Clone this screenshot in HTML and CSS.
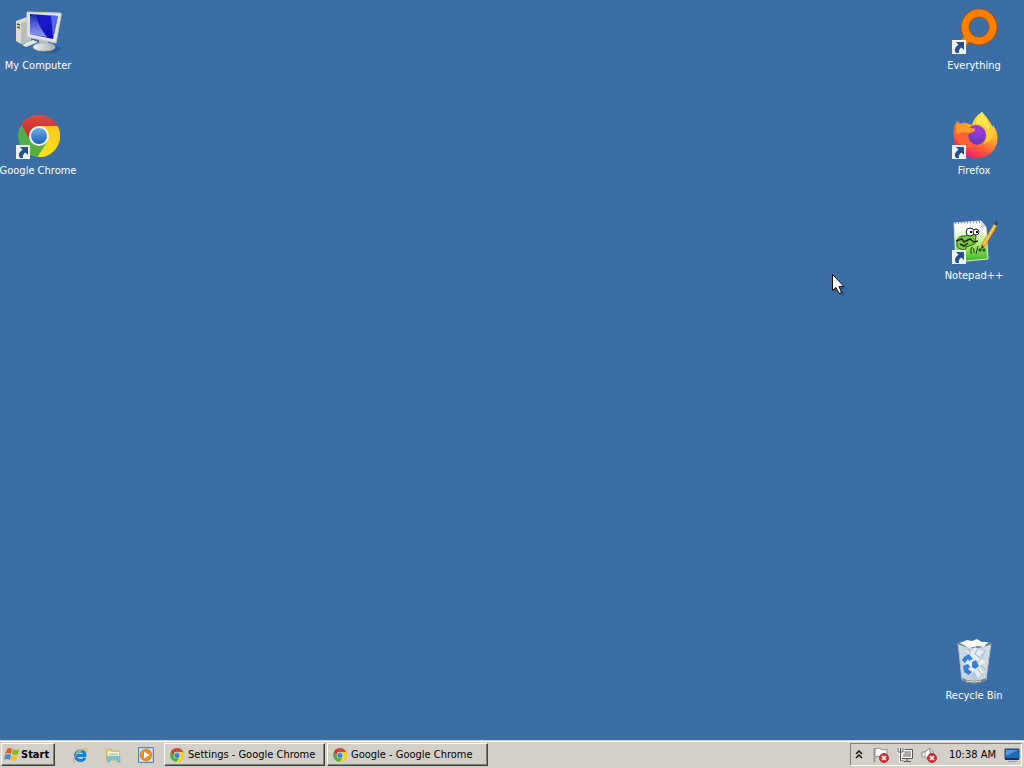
FILE: index.html
```html
<!DOCTYPE html>
<html lang="en">
<head>
<meta charset="utf-8">
<meta name="viewport" content="width=device-width, initial-scale=1">
<title>Desktop</title>
<link rel="stylesheet" href="styles.css">
</head>
<body>
<svg class="defs" aria-hidden="true">
  <defs>
    <linearGradient id="screen" x1="0" y1="0" x2="1" y2="1"><stop offset="0" stop-color="#1717a4"/><stop offset=".45" stop-color="#1a1bd0"/><stop offset="1" stop-color="#0505a0"/></linearGradient>
    <linearGradient id="gloss" x1="0" y1="0" x2="0" y2="1"><stop offset="0" stop-color="#2a38c0"/><stop offset="1" stop-color="#c4d8ff"/></linearGradient>
    <linearGradient id="metal" x1="0" y1="0" x2="1" y2="0"><stop offset="0" stop-color="#f4f4ee"/><stop offset="1" stop-color="#a9aeb4"/></linearGradient>
    <linearGradient id="red" x1="0" y1="0" x2="0" y2="1"><stop offset="0" stop-color="#e04a42"/><stop offset="1" stop-color="#c02723"/></linearGradient>
    <linearGradient id="yellow" x1="0" y1="0" x2="0" y2="1"><stop offset="0" stop-color="#fbc91c"/><stop offset="1" stop-color="#fddf1d"/></linearGradient>
    <linearGradient id="green" x1="0" y1="0" x2="1" y2="1"><stop offset="0" stop-color="#4caf50"/><stop offset="1" stop-color="#5aae3c"/></linearGradient>
    <linearGradient id="blue" x1="0" y1="0" x2="0" y2="1"><stop offset="0" stop-color="#69aee4"/><stop offset="1" stop-color="#1b62b5"/></linearGradient>
    <linearGradient id="fire" x1=".85" y1="0" x2=".3" y2="1"><stop offset="0" stop-color="#fff052"/><stop offset=".4" stop-color="#ffb52c"/><stop offset=".7" stop-color="#ff5a37"/><stop offset="1" stop-color="#e8187a"/></linearGradient>
    <radialGradient id="globe" cx=".6" cy=".2" r=".9"><stop offset="0" stop-color="#a63ce0"/><stop offset="1" stop-color="#553ab8"/></radialGradient>
    <linearGradient id="page" x1="0" y1="0" x2="0" y2="1"><stop offset=".2" stop-color="#ffffff"/><stop offset=".55" stop-color="#b6ef73"/><stop offset="1" stop-color="#35b31c"/></linearGradient>
    <linearGradient id="bin" x1="0" y1="0" x2="1" y2="0"><stop offset="0" stop-color="#d4e0ea"/><stop offset=".5" stop-color="#b3c5d4"/><stop offset="1" stop-color="#dbe5ec"/></linearGradient>
    <symbol id="chrome" viewBox="0 0 42 42">
      <circle cx="21" cy="21" r="21" fill="url(#green)"/>
      <path d="M21 11H39.5A21 21 0 0 1 19.5 42L29.7 26Z" fill="url(#yellow)"/>
      <path d="M3.4 9.5A21 21 0 0 1 39.5 11H21A10 10 0 0 0 12 25Z" fill="url(#red)"/>
      <circle cx="21" cy="21" r="10" fill="#f4f6f4"/>
      <circle cx="21" cy="21" r="8" fill="url(#blue)"/>
    </symbol>
    <symbol id="shortcut" viewBox="0 0 14 14">
      <path d="M0 0H14V14H0Z" fill="#eef2f6"/>
      <path d="M4 2H12V10L9.500 7.500C7 9 6.500 10.500 7 13H4C2 10 3 7 6.500 4.700Z" fill="#24508c"/>
    </symbol>
    <symbol id="denied" viewBox="0 0 10 10">
      <circle cx="5" cy="5" r="4.500" fill="#d9363b" stroke="#b9282c"/>
      <path d="M3 3L7 7M7 3L3 7" stroke="#fff" stroke-width="1.500"/>
    </symbol>
  </defs>
</svg>

<main class="desktop">
  <div class="column">
    <button class="shortcut" type="button">
      <svg class="picture" viewBox="0 0 48 48" aria-hidden="true">
        <ellipse cx="35" cy="41" rx="12" ry="4" fill="#234d7c" opacity=".5"/>
        <path d="M2 13L13 9L17 12V34L7 36L2 33Z" fill="#dcdcd4"/>
        <path d="M7 15L17 12V34L7 36Z" fill="#babdbd"/>
        <path d="M3 16L6 17M3 19L6 20" stroke="#4b5a4e" stroke-width="1.500"/>
        <path d="M8 37L19 32L24 34L12 39Z" fill="#e9e9e4"/>
        <path d="M25 31H34V38H25Z" fill="#b8bcc2"/>
        <ellipse cx="30" cy="39" rx="11" ry="4" fill="url(#metal)" stroke="#b7babd"/>
        <path d="M13 4L46 5Q48 5 47 8L42 35L13 29Z" fill="#dfe3e6" stroke="#c4c9ce"/>
        <path d="M16 6L44 8L39 31L16 26Z" fill="url(#screen)"/>
        <path d="M16 8L22 7Q24 18 33 29L16 26Z" fill="url(#gloss)" opacity=".7"/>
        <path d="M37 7L44 8L39 31Z" fill="#6b8af0" opacity=".7"/>
      </svg>
      <span class="label">My Computer</span>
    </button>
    <button class="shortcut" type="button">
      <svg class="picture" viewBox="0 0 48 48" aria-hidden="true">
        <use href="#chrome" x="4" y="2" width="42" height="42"/>
        <use href="#shortcut" x="2" y="32" width="14" height="14"/>
      </svg>
      <span class="label">Google Chrome</span>
    </button>
  </div>

  <div class="column">
    <button class="shortcut" type="button">
      <svg class="picture" viewBox="0 0 48 48" aria-hidden="true">
        <path d="M21 27L13 35" stroke="#a2541c" stroke-width="9"/>
        <circle cx="29" cy="19" r="14" fill="none" stroke="#a2541c" stroke-width="9"/>
        <path d="M21 27L13 35" stroke="#ff8000" stroke-width="7"/>
        <circle cx="29" cy="19" r="14" fill="none" stroke="#ff8000" stroke-width="7"/>
        <use href="#shortcut" x="2" y="32" width="14" height="14"/>
      </svg>
      <span class="label">Everything</span>
    </button>
    <button class="shortcut" type="button">
      <svg class="picture" viewBox="0 0 48 48" aria-hidden="true">
        <path d="M4 15Q5 10 8 8L10 11Q13 9 16 10L22 12Q24 4 32 -1Q33 5 38 9Q41 12 42 15L43 12Q49 20 47 30Q44 42 31 45Q16 47 8 36Q1 26 4 15Z" fill="url(#fire)"/>
        <circle cx="26" cy="22" r="10" fill="url(#globe)"/>
        <path d="M4 15Q5 10 8 8L10 11Q15 9 18 14L25 16Q25 19 20 20Q17 22 19 26Q21 31 27 32Q19 38 11 33Q4 27 4 15Z" fill="#ff6334"/>
        <path d="M7 9L10 11Q15 9 18 14L25 16Q25 19 19 20Q13 18 7 21Q5 14 7 9Z" fill="#ff9a32"/>
        <path d="M22 12Q27 10 31 13Q35 16 38 17L36 19Q38 26 33 31Q42 29 44 20Q43 10 32 -1Q24 4 22 12Z" fill="#ffcd3c"/>
        <path d="M32 -1Q26 4 26 11Q34 10 38 17Q42 13 32 -1Z" fill="#ffe84c"/>
        <use href="#shortcut" x="2" y="32" width="14" height="14"/>
      </svg>
      <span class="label">Firefox</span>
    </button>
    <button class="shortcut" type="button">
      <svg class="picture" viewBox="0 0 48 48" aria-hidden="true">
        <path d="M4 5L31 3L36 9L38 41L6 44Z" fill="url(#page)" stroke="#dfe8e0"/>
        <path d="M31 3L36 9L31 10Z" fill="#d2d8d6"/>
        <path d="M5 5L31 4" stroke="#8a9298" stroke-width="2" stroke-dasharray="1 2"/>
        <path d="M7 25Q7 17 16 18L19 16Q29 15 25 22Q28 25 22 27L16 29Q16 34 11 31Q6 30 7 25Z" fill="#7acb35" stroke="#2a5620"/>
        <path d="M6 23L12 21L14 24L20 21L24 24L28 23M10 26L14 28L18 25" fill="none" stroke="#1b281b" stroke-width="1.500"/>
        <circle cx="20" cy="14" r="4" fill="#fff" stroke="#222"/>
        <circle cx="26" cy="14" r="3" fill="#fff" stroke="#222"/>
        <path d="M20 14h2M26 14h2" stroke="#111" stroke-width="2"/>
        <path d="M21 36V30Q24 28 24 35M26 36L28 28M28 32h4M30 30v4M32 32h4M34 30v4" fill="none" stroke="#143d12"/>
        <path d="M31 31L32 26L44 6L47 8L35 28Z" fill="#f8b32b" stroke="#b76c18" stroke-width=".5"/>
        <path d="M34 26L45 7" stroke="#ffe07b"/>
        <path d="M44 6L46 2L48 3L47 8Z" fill="#3f4c66"/>
        <path d="M31 31L32 27L34 29Z" fill="#332b20"/>
        <use href="#shortcut" x="2" y="32" width="14" height="14"/>
      </svg>
      <span class="label">Notepad++</span>
    </button>
    <button class="shortcut bottom" type="button">
      <svg class="picture" viewBox="0 0 48 48" aria-hidden="true">
        <path d="M8 5L41 5L36 42Q24 48 12 42Z" fill="url(#bin)" stroke="#aebdca"/>
        <path d="M8 5Q15 9 24 9T41 5" fill="none" stroke="#637a8c" stroke-width="2"/>
        <path d="M10 5L17 2L22 3L27 1L32 4L38 4L34 9L28 8L19 10Z" fill="#f8fafa"/>
        <path d="M25 9L34 14L28 19L36 24L29 28L34 34L28 40L24 33L20 38L14 32L17 26L12 20L19 16L14 12L21 13Z" fill="#f0f5f9" opacity=".8"/>
        <path d="M28 10L25 16L31 21L27 25M18 11L21 16M31 27L36 32M36 12L32 18M27 30L32 37" fill="none" stroke="#a1b4c3"/>
        <path d="M14 19L19 16L23 21L19 23L18 21L15 25L12 22ZM22 24L26 22L29 28L25 31L22 29ZM13 28L18 26L20 29L18 31L22 34L19 37L14 34Z" fill="#397dd8"/>
        <path d="M12 40Q24 46 36 40L36 43Q24 49 13 43Z" fill="#718085"/>
        <path d="M16 43Q24 45 31 43" stroke="#dce2df" fill="none"/>
      </svg>
      <span class="label">Recycle Bin</span>
    </button>
  </div>

  <svg class="pointer" viewBox="0 0 16 23" aria-hidden="true">
    <path d="M2 3V19L6 16L10 22L13 20L10 15H15Z" fill="#18385c" opacity=".4"/>
    <path d="M.5 .5V16.500L4 13.500L7 19.500L9.500 18.500L7 12.500H12Z" fill="#fff" stroke="#111"/>
  </svg>
</main>

<footer class="taskbar">
  <button class="raised start" type="button">
    <svg class="small" viewBox="0 0 16 16" aria-hidden="true">
      <path d="M3 2Q6 0 8 2L7 7Q4 5 1 7Z" fill="#e75a25"/>
      <path d="M9 2Q12 4 15 2L14 7Q11 9 8 7Z" fill="#80b92c"/>
      <path d="M1 8Q4 6 7 8L6 13Q3 11 0 13Z" fill="#3f8fd2"/>
      <path d="M8 8Q11 10 14 8L12 13Q10 15 6 13Z" fill="#f7bd24"/>
    </svg>
    <span>Start</span>
  </button>
  <nav class="quick" aria-label="Quick launch">
    <button class="plain" type="button" aria-label="Internet Explorer">
      <svg class="small" viewBox="0 0 16 16" aria-hidden="true">
        <path d="M13 11Q11 14 7.500 13.500Q3.500 12.500 3.500 8.500Q4 4 8.500 4Q13 4 13 8.500H5" fill="none" stroke="#1b80c8" stroke-width="3"/>
        <path d="M4 7Q5.500 3.500 9 3.500" fill="none" stroke="#65c5f2" stroke-width="1.500"/>
        <path d="M3 15Q0 15 2 11Q6 5 11 2Q15 0 15 2Q15.500 3 14.500 5" fill="none" stroke="#e6b729"/>
      </svg>
    </button>
    <button class="plain" type="button" aria-label="Windows Explorer">
      <svg class="small" viewBox="0 0 16 16" aria-hidden="true">
        <path d="M1 3L6 2L7 4L14 4V13H2Z" fill="#eadb86" stroke="#c7af55"/>
        <path d="M3 5H14V9H3Z" fill="#fff7cd"/>
        <path d="M4 7H13" stroke="#90bb72"/>
        <path d="M2 15V11Q2 9 4 9H12Q15 9 15 11V15H12V12H5V15Z" fill="#75c5e4" stroke="#5aa3c9" stroke-width=".5"/>
      </svg>
    </button>
    <button class="plain" type="button" aria-label="Windows Media Player">
      <svg class="small" viewBox="0 0 16 16" aria-hidden="true">
        <path d="M.5 .5H15.500V15.500H.5Z" fill="#b7d2f0" stroke="#5582bc"/>
        <path d="M2 2H14V14H2Z" fill="#dce9f6"/>
        <circle cx="8" cy="8" r="6" fill="#f28b17" stroke="#d66f12" stroke-width=".5"/>
        <path d="M6 4.500L11.500 8L6 11.500Z" fill="#fff"/>
      </svg>
    </button>
  </nav>
  <nav class="windows" aria-label="Open windows">
    <button class="raised task" type="button"><svg class="small" aria-hidden="true"><use href="#chrome" x="1" y="1" width="14" height="14"/></svg><span>Settings - Google Chrome</span></button>
    <button class="raised task" type="button"><svg class="small" aria-hidden="true"><use href="#chrome" x="1" y="1" width="14" height="14"/></svg><span>Google - Google Chrome</span></button>
  </nav>
  <div class="tray">
    <button class="plain expand" type="button" aria-label="Show hidden icons">
      <svg class="chevrons" viewBox="0 0 8 10" aria-hidden="true"><path d="M1 4L4 1L7 4M1 8L4 5L7 8" fill="none" stroke="#111" stroke-width="1.500"/></svg>
    </button>
    <button class="plain" type="button" aria-label="Action Center">
      <svg class="small" viewBox="0 0 16 16" aria-hidden="true">
        <path d="M1.500 1V15" stroke="#999" stroke-width="2"/>
        <path d="M2 2Q6 0 8 2T14 2V10Q10 12 8 10T2 10Z" fill="#fafafa" stroke="#8a8a88"/>
        <use href="#denied" x="6" y="6" width="10" height="10"/>
      </svg>
    </button>
    <button class="plain" type="button" aria-label="Network">
      <svg class="small" viewBox="0 0 16 16" aria-hidden="true">
        <path d="M4.500 2.500H15.500V11.500H4.500Z" fill="#fff" stroke="#555"/>
        <path d="M6 4H14V10H6Z" fill="#aaa9a5"/>
        <path d="M7 14.500H14M10 12V15" stroke="#555"/>
        <path d="M1 1V5H6V1M3.500 5V14H7" fill="none" stroke="#fff" stroke-width="3"/>
        <path d="M1 1V5H6V1M3.500 1V14H7" fill="none" stroke="#555"/>
      </svg>
    </button>
    <button class="plain" type="button" aria-label="Volume muted">
      <svg class="small" viewBox="0 0 16 16" aria-hidden="true">
        <path d="M1 5H4L9 1V14L4 10H1Z" fill="#fafafa" stroke="#858583"/>
        <path d="M4 5V10" stroke="#a0a09d"/>
        <path d="M11 3Q13 5 13 8" fill="none" stroke="#999"/>
        <use href="#denied" x="6" y="6" width="10" height="10"/>
      </svg>
    </button>
    <time class="clock" datetime="10:38">10:38 AM</time>
    <button class="plain" type="button" aria-label="Show desktop">
      <svg class="small" viewBox="0 0 16 16" aria-hidden="true">
        <path d="M1 2H15V12H1Z" fill="#2168b5" stroke="#1c477c"/>
        <path d="M2 3H14L2 9Z" fill="#4e9ae0"/>
        <path d="M1 12H15" stroke="#173454" stroke-width="2"/>
        <path d="M4 14.500H13" stroke="#7aa2cc"/>
      </svg>
    </button>
  </div>
</footer>
</body>
</html>
```

FILE: styles.css
```css
* {
  box-sizing: border-box;
}

body {
  display: flex;
  flex-direction: column;
  min-height: 100vh;
  margin: 0;
  background: #3b6ea5;
  font: 11px/14px Tahoma, "DejaVu Sans Condensed", "Noto Sans", sans-serif;
}

button {
  margin: 0;
  padding: 0;
  border: 0;
  background: none;
  color: inherit;
  font: inherit;
}

svg {
  display: block;
  flex: none;
}

.defs {
  position: absolute;
  width: 0;
  height: 0;
}

.desktop {
  position: relative;
  display: flex;
  flex: 1;
  justify-content: space-between;
  padding: 8px 12px 5px 0;
  color: #fff;
}

.column {
  display: flex;
  flex-direction: column;
  gap: 40px;
}

.shortcut {
  display: flex;
  flex-direction: column;
  align-items: center;
  gap: 3px;
  width: 76px;
  min-height: 65px;
}

.bottom {
  margin-top: auto;
  min-height: 97px;
}

.picture {
  width: 48px;
  height: 48px;
  overflow: visible;
}

.label {
  white-space: nowrap;
}

.pointer {
  position: absolute;
  left: 832px;
  top: 274px;
  width: 16px;
  height: 23px;
}

.taskbar {
  display: flex;
  align-items: stretch;
  height: 28px;
  padding: 2px 2px 2px 1px;
  border-top: 1px solid #d4d0c8;
  background: #d4d0c8;
  box-shadow: inset 0 1px #fff;
  color: #000;
}

.raised {
  display: flex;
  align-items: center;
  border: 1px solid;
  border-color: #fff #404040 #404040 #fff;
  background: #d4d0c8;
  box-shadow: inset -1px -1px #808080;
}

.small {
  width: 16px;
  height: 16px;
}

.start {
  gap: 1px;
  width: 54px;
  padding: 0 2px;
  font-weight: bold;
}

.quick {
  display: flex;
  align-items: center;
  gap: 17px;
  margin: 0 10px 0 17px;
}

.windows {
  display: flex;
  flex: 1;
  gap: 2px;
  min-width: 0;
}

.task {
  flex: 0 1 161px;
  gap: 3px;
  min-width: 0;
  padding: 0 4px;
  overflow: hidden;
  white-space: nowrap;
}

.tray {
  display: flex;
  align-items: center;
  gap: 8px;
  padding: 0 1px 0 4px;
  border: 1px solid;
  border-color: #808080 #fff #fff #808080;
}

.expand {
  margin-right: 2px;
}

.chevrons {
  width: 8px;
  height: 10px;
}

.clock {
  padding-left: 4px;
  white-space: nowrap;
}
```
